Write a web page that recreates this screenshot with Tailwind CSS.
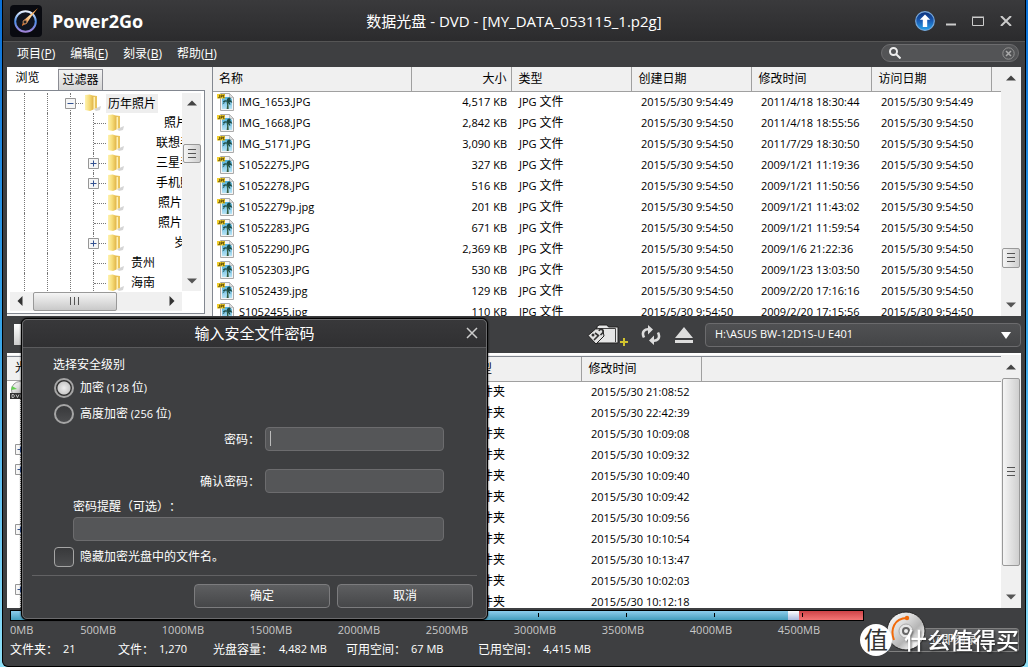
<!DOCTYPE html>
<html lang="zh-CN">
<head>
<meta charset="utf-8">
<title>Power2Go</title>
<script src="https://cdn.jsdelivr.net/npm/@tailwindcss/browser@4"></script>
</head>
<body class="h-screen overflow-hidden bg-linear-to-b from-[#0a6fd6] via-[#38a5e8] to-[#8fe0f7] pr-[2px] pl-[2px] font-['Open_Sans','Noto_Sans_CJK_SC',sans-serif] text-xs text-black [text-spacing-trim:space-all]">
<svg class="absolute size-0" aria-hidden="true">
  <defs>
    <linearGradient id="gold" x1="0" x2="1"><stop offset="0" stop-color="#fff3b0"/><stop offset=".5" stop-color="#f6dc78"/><stop offset="1" stop-color="#dfb347"/></linearGradient>
    <linearGradient id="sky" x1="0" x2="0" y1="0" y2="1"><stop offset="0" stop-color="#4fb0dc"/><stop offset="1" stop-color="#b9e4f5"/></linearGradient>
    <linearGradient id="orb" x1="0" x2="0" y1="0" y2="1"><stop offset="0" stop-color="#0b2f78"/><stop offset=".5" stop-color="#1a5cb4"/><stop offset="1" stop-color="#27a5ec"/></linearGradient>
    <linearGradient id="metal" x1="0" x2="1" y1="0" y2="1"><stop offset="0" stop-color="#fff"/><stop offset=".35" stop-color="#ddd"/><stop offset=".6" stop-color="#b5b5b5"/><stop offset=".8" stop-color="#f5f5f5"/><stop offset="1" stop-color="#999"/></linearGradient>
    <linearGradient id="ring" x1="0" x2="0" y1="0" y2="1"><stop offset="0" stop-color="#e8f1ff"/><stop offset=".5" stop-color="#4d8eea"/><stop offset="1" stop-color="#a184d8"/></linearGradient>
    <linearGradient id="flame" x1="0" x2="1" y1="1" y2="0"><stop offset="0" stop-color="#d4621a"/><stop offset=".5" stop-color="#ffd9a0"/><stop offset="1" stop-color="#ff8a1e"/></linearGradient>
  </defs>
  <symbol id="folder" viewBox="0 0 18 18">
    <path d="M10 15l7-3-1 4-4 1z" fill="#b9b9b9" opacity=".6"/>
    <path d="M5 1l8 1v12l-4 1z" fill="#e9c45d"/><path d="M1 1l5-.6 3.500 2v13.200L6 17l-5-1z" fill="url(#gold)"/><path d="M9.500 3v12.500l1.500-1V3z" fill="#fff1b5"/>
  </symbol>
  <symbol id="jpg" viewBox="0 0 18 18">
    <path d="M3.500.5h9l4 4v13h-13z" fill="#f4f4f4" stroke="#aaa"/><path d="M12.500.5v4h4z" fill="#ddd" stroke="#aaa" stroke-width=".6"/>
    <path d="M5 4h7.500l2.500 2v10H5z" fill="url(#sky)"/>
    <path d="M9.500 8q1 3 .2 8h2q-.2-5-1-8z" fill="#345a3c"/><path d="M10.400 8.500q-4-.5-5 3 1.500-2 3-1.500-1-.5-2.600-1.500 2-2 4-1 0-3 3-3 1.500.7.500 2.500 1.500 0 2 3-1-1-3-1 1 1 1 3-2-1-2.900-3.500z" fill="#1c4a43"/>
    <path d="M0 1h8v4.500H0z" fill="#f3cf2c"/><path d="M1 4.700h1.600V1.800M4 5V2h1.300v1.500H4M7.600 2H6.500v2.600h1.100" fill="none" stroke="#403500" stroke-width=".7"/>
  </symbol>
  <symbol id="plus" viewBox="0 0 11 11"><path d="M.5.5h10v10H.5z" fill="#f5f5f5" stroke="#969696"/><path d="M2.500 5.500h6M5.500 2.500v6" stroke="#31508f"/></symbol>
  <symbol id="minus" viewBox="0 0 11 11"><path d="M.5.5h10v10H.5z" fill="#f5f5f5" stroke="#969696"/><path d="M2.500 5.500h6" stroke="#31508f"/></symbol>
  <symbol id="up" viewBox="0 0 10 6"><path d="M0 5.500L5 .5l5 5z" fill="#444"/></symbol>
  <symbol id="down" viewBox="0 0 10 6"><path d="M0 .5h10l-5 5z" fill="#555"/></symbol>
</svg>

<div class="relative flex h-full flex-col overflow-hidden rounded-b-md border-x border-b border-black bg-[#3e3f41]">
  <header class="flex h-[41px] shrink-0 items-center bg-linear-to-b from-[#3a3a3c] to-[#2b2b2d] px-[7px] text-white">
    <div class="flex flex-1 items-center">
      <svg class="size-[32px]" viewBox="0 0 32 32"><rect width="32" height="32" rx="4" fill="#090a10"/><circle cx="15.500" cy="16.500" r="10.300" fill="#10141f" stroke="url(#ring)" stroke-width="2"/><path d="M12 20l2-5L28 3l-7 9-4 6-5 3z" fill="url(#flame)"/><circle cx="15" cy="17" r="2" fill="#222" stroke="#c98a5c"/></svg>
      <span class="ml-[10px] text-lg font-bold">Power2Go</span>
    </div>
    <h1 class="text-[15px] whitespace-nowrap">数据光盘 - DVD - [MY_DATA_053115_1.p2g]</h1>
    <div class="flex flex-1 items-center justify-end">
      <button aria-label="升级"><svg class="size-[20px]" viewBox="0 0 20 20"><circle cx="10" cy="10" r="9.300" fill="url(#orb)" stroke="#78a9dc" stroke-width="1.200"/><path d="M10 3.500l5.200 5.300h-3V16H7.800V8.800h-3z" fill="#fff"/></svg></button>
      <button aria-label="最小化" class="ml-[11px]"><svg class="h-[12px] w-[10px]" viewBox="0 0 10 12"><path d="M0 9.500h10" stroke="#ccc" stroke-width="2"/></svg></button>
      <button aria-label="最大化" class="ml-[16px]"><svg class="h-[10px] w-[12px]" viewBox="0 0 12 10"><path d="M.5 1.500h11v8H.5zM0 1h12" fill="none" stroke="#ccc"/></svg></button>
      <button aria-label="关闭" class="mr-[6px] ml-[16px]"><svg class="h-[10px] w-[12px]" viewBox="0 0 12 10"><path d="M1 0l10 10M11 0L1 10" stroke="#ccc" stroke-width="2"/></svg></button>
    </div>
  </header>
  <div class="flex h-[26px] shrink-0 items-center justify-between border-t border-[#555] pr-[6px] pb-[3px] pl-[14px] text-white">
    <nav class="flex gap-[15px] pt-[2px] text-xs">
      <button>项目(<u>P</u>)</button><button>编辑(<u>E</u>)</button><button>刻录(<u>B</u>)</button><button>帮助(<u>H</u>)</button>
    </nav>
    <label class="flex h-[18px] w-[138px] items-center rounded-full border border-[#6c6c6e] bg-[#535456] pr-[3px] pl-[7px]">
      <svg class="size-[12px] shrink-0" viewBox="0 0 12 12"><circle cx="4.500" cy="4.500" r="3.500" fill="none" stroke="#eee" stroke-width="2"/><path d="M7 7l4.500 4.500" stroke="#eee" stroke-width="2"/></svg>
      <input aria-label="搜索" class="min-w-0 flex-1 bg-transparent outline-none">
      <button aria-label="清除"><svg class="size-[13px]" viewBox="0 0 13 13"><circle cx="6.500" cy="6.500" r="5.700" fill="none" stroke="#929292"/><path d="M4 4l5 5M9 4L4 9" stroke="#aaa" stroke-width="1.500"/></svg></button>
    </label>
  </div>

  <main class="mr-[4px] ml-[4px] flex min-h-0 flex-1 flex-col">
    <div class="flex min-h-0 flex-[250] bg-[#f0f0f0]">
      <aside class="mr-[5px] flex w-[200px] shrink-0 flex-col bg-[#f0f0f0]">
        <div role="tablist" class="flex h-[23px] shrink-0 items-end">
          <button role="tab" aria-selected="true" class="h-[23px] w-[51px] bg-white pr-[10px] pb-[2px] text-center">浏览</button>
          <button role="tab" aria-selected="false" class="h-[21px] w-[45px] border border-b-0 border-[#8b8c93] bg-linear-to-b from-[#f3f3f3] to-[#d6d6d6]">过滤器</button>
        </div>
        <div class="mr-[2px] mb-[2px] flex min-h-0 flex-1 flex-col border-t border-r border-b border-[#828790] bg-white pt-[2px] pl-[3px]">
          <div class="flex min-h-0 flex-1 pr-[3px]">
            <ul id="tree" class="relative min-w-0 flex-1 overflow-hidden pl-[14px]"></ul>
            <div class="flex w-[19px] flex-col items-center bg-[#f0f0f0] py-[7px]">
              <svg class="h-[6px] w-[10px] shrink-0"><use href="#up"/></svg>
              <div class="flex-[38]"></div>
              <div class="flex h-[19px] w-[18px] shrink-0 items-center justify-center rounded-xs border border-[#999] bg-linear-to-r from-[#f5f5f5] to-[#cfcfcf]"><svg class="size-[10px]" viewBox="0 0 10 10"><path d="M1 .5h8M1 4.500h8M1 8.500h8" stroke="#555"/></svg></div>
              <div class="flex-[114]"></div>
              <svg class="h-[6px] w-[10px] shrink-0"><use href="#down"/></svg>
            </div>
          </div>
          <div class="mt-px mr-[22px] mb-[2px] flex h-[19px] shrink-0 items-center bg-[#f0f0f0] pl-[7px]">
            <svg class="h-[10px] w-[6px]" viewBox="0 0 6 10"><path d="M5.500 0v10L.5 5z" fill="#333"/></svg>
            <div class="ml-[10px] flex h-[19px] w-[84px] items-center justify-center rounded-xs border border-[#999] bg-linear-to-b from-[#f5f5f5] to-[#c9c9c9]"><svg class="size-[10px]" viewBox="0 0 10 10"><path d="M.5 1v8M4.500 1v8M8.500 1v8" stroke="#555"/></svg></div>
            <svg class="mr-[7px] ml-auto h-[10px] w-[6px]" viewBox="0 0 6 10"><path d="M.5 0v10l5-5z" fill="#333"/></svg>
          </div>
        </div>
      </aside>
      <section class="min-w-0 flex-1 overflow-hidden border-l border-[#828790] bg-white">
        <table class="w-full table-fixed border-collapse">
          <colgroup><col class="w-[198px]"><col class="w-[100px]"><col class="w-[120px]"><col class="w-[120px]"><col class="w-[120px]"><col class="w-[120px]"><col></colgroup>
          <thead><tr class="h-[24px] border-b border-[#a0a0a0] bg-[#f0f0f0] text-left">
            <th class="border-r border-[#a0a0a0] pl-[6px] font-normal">名称</th><th class="border-r border-[#a0a0a0] pr-[4px] text-right font-normal">大小</th><th class="border-r border-[#a0a0a0] pl-[7px] font-normal">类型</th><th class="border-r border-[#a0a0a0] pl-[7px] font-normal">创建日期</th><th class="border-r border-[#a0a0a0] pl-[7px] font-normal">修改时间</th><th class="border-r border-[#a0a0a0] pl-[7px] font-normal">访问日期</th><th></th>
          </tr></thead>
          <tbody id="files"></tbody>
        </table>
      </section>
      <div class="flex w-[20px] shrink-0 flex-col items-center bg-[#f0f0f0] py-[8px]">
        <svg class="h-[6px] w-[10px] shrink-0"><use href="#up"/></svg>
        <div class="flex-[168]"></div>
        <div class="flex h-[20px] w-[18px] shrink-0 items-center justify-center rounded-xs border border-[#999] bg-linear-to-r from-[#f5f5f5] to-[#cfcfcf]"><svg class="size-[10px]" viewBox="0 0 10 10"><path d="M1 .5h8M1 4.500h8M1 8.500h8" stroke="#555"/></svg></div>
        <div class="flex-[34]"></div>
        <svg class="h-[6px] w-[10px] shrink-0"><use href="#down"/></svg>
      </div>
    </div>

    <div class="flex h-[37px] shrink-0 items-center bg-[#3e3f41] pt-px pl-[7px]">
      <button aria-label="添加" class="h-[21px] w-[30px] bg-linear-to-b from-white to-[#ccc]"></button>
      <button aria-label="安全文件夹" class="ml-auto"><svg class="h-[24px] w-[42px]" viewBox="0 0 42 24"><path d="M10 6V3.500l2-1.500h8l1.500 2H31v16H10z" fill="#e6e6e6" stroke="#222"/><path d="M11 5.500h17.500V19" fill="none" stroke="#444"/><path d="M1 12.500L8.500 6l7-.5L17 13l-8 8z" fill="#e2e2e2" stroke="#222"/><circle cx="6" cy="12" r="1.500" fill="#333"/><path d="M12 8c1-3 5-1.500 4 1.500L13.500 12M8 10l4 3M7 17l5-5" fill="none" stroke="#333" stroke-width="1.600"/><path d="M37 15v8M33 19h8" stroke="#d1c32f" stroke-width="2"/></svg></button>
      <button aria-label="刷新" class="ml-[12px]"><svg class="size-[20px]" viewBox="0 0 20 20"><path d="M3 12.500C0 6.500 4 3.500 9 4.500M17 7.500c3 6-1 9-6 8" fill="none" stroke="#ddd" stroke-width="2.600"/><path d="M7 0l5 4.500-5 5zM13 20l-5-4.500 5-5z" fill="#ddd"/></svg></button>
      <button aria-label="弹出" class="ml-[13px]"><svg class="h-[18px] w-[20px]" viewBox="0 0 20 18"><path d="M10 1l9 11H1zM1 14h18v3H1z" fill="#ddd"/></svg></button>
      <div class="relative ml-[11px] w-[316px]">
        <select aria-label="刻录机" class="block h-[24px] w-full appearance-none rounded-[4px] border border-[#6b6b6d] bg-linear-to-b from-[#505153] to-[#444547] pl-[9px] text-[11px] text-white"><option>H:\ASUS BW-12D1S-U E401</option></select>
        <svg class="pointer-events-none absolute top-[9px] right-[10px] h-[7px] w-[10px]" viewBox="0 0 10 7"><path d="M0 0h10L5 7z" fill="#fff"/></svg>
      </div>
    </div>

    <div class="flex min-h-0 flex-[254] border-t-2 border-white bg-[#f0f0f0] pt-px">
      <section class="flex min-w-0 flex-1 overflow-hidden border-t border-[#828790] bg-white">
        <div class="flex w-[454px] shrink-0 flex-col">
          <div class="h-[24px] shrink-0 border-b border-[#a0a0a0] bg-[#f0f0f0] pt-[3px] pl-[8px]">光盘</div>
          <div class="relative min-h-0 flex-1">
            <svg class="absolute top-0 left-[3px] h-[18px] w-[20px]" viewBox="0 0 20 18"><circle cx="10" cy="9" r="8.500" fill="url(#metal)" stroke="#999"/><path d="M2 5l5 3-6 1z" fill="#63ce52"/><path d="M0 12h20v6H0z" fill="#333"/><path d="M2 13.500v3h1.500l1-1.500-1-1.500zM6 13.500l1.500 3 1.500-3M11 13.500v3h1.500l1-1.500-1-1.500z" fill="none" stroke="#ddd" stroke-width=".8"/></svg>
            <div class="absolute top-[18px] bottom-0 left-[13px] border-l border-dotted border-[#777]"></div>
            <ul id="discTree" class="flex flex-col pt-[59px] pl-[8px]"></ul>
          </div>
        </div>
        <table class="h-min w-full table-fixed border-collapse">
          <colgroup><col class="w-[120px]"><col class="w-[120px]"><col></colgroup>
          <thead><tr class="h-[25px] border-b border-[#a0a0a0] bg-[#f0f0f0] text-left"><th class="border-r border-[#a0a0a0] pl-[7px] font-normal">类型</th><th class="border-r border-[#a0a0a0] pl-[7px] font-normal">修改时间</th><th></th></tr></thead>
          <tbody id="folders"></tbody>
        </table>
      </section>
      <div class="flex w-[20px] shrink-0 flex-col items-center bg-[#f0f0f0] py-[8px]">
        <svg class="h-[6px] w-[10px] shrink-0"><use href="#up"/></svg>
        <div class="my-[8px] flex min-h-0 w-[18px] flex-1 items-center justify-center rounded-xs border border-[#999] bg-linear-to-r from-[#f5f5f5] to-[#cfcfcf]"><svg class="size-[10px]" viewBox="0 0 10 10"><path d="M1 .5h8M1 4.500h8M1 8.500h8" stroke="#555"/></svg></div>
        <svg class="mt-[20px] h-[6px] w-[10px] shrink-0"><use href="#down"/></svg>
      </div>
    </div>
  </main>

  <footer class="relative h-[58px] shrink-0 pt-[2px] pr-[8px] pl-[7px] text-white">
    <div class="flex h-[11px] w-[854px] border border-black">
      <div id="used" class="flex w-[777px] items-start bg-linear-to-b from-[#8ccdec] to-[#429dbd] pt-[2px]"></div>
      <div class="w-[11px] bg-linear-to-b from-white to-[#aab9dc]"></div>
      <div class="flex-1 bg-linear-to-b from-[#ce4348] to-[#f47575] pt-[2px] pl-[3px]"><i class="block h-[4px] w-px bg-black"></i></div>
    </div>
    <div id="scale" class="flex pt-[1px] text-[11px] leading-[16px] text-[#c8c8c8]"></div>
    <dl class="flex gap-[16px] pt-[2px] text-[11px] leading-[18px] whitespace-nowrap">
      <div class="flex w-[92px] gap-[5px]"><dt class="text-xs leading-[18px]">文件夹<span class="font-['Noto_Sans_CJK_TC']">：</span></dt><dd>21</dd></div>
      <div class="flex w-[79px] gap-[5px]"><dt class="text-xs leading-[18px]">文件<span class="font-['Noto_Sans_CJK_TC']">：</span></dt><dd>1,270</dd></div>
      <div class="flex w-[117px] gap-[6px]"><dt class="text-xs leading-[18px]">光盘容量<span class="font-['Noto_Sans_CJK_TC']">：</span></dt><dd>4,482 MB</dd></div>
      <div class="flex w-[116px] gap-[5px]"><dt class="text-xs leading-[18px]">可用空间<span class="font-['Noto_Sans_CJK_TC']">：</span></dt><dd>67 MB</dd></div>
      <div class="flex gap-[5px]"><dt class="text-xs leading-[18px]">已用空间<span class="font-['Noto_Sans_CJK_TC']">：</span></dt><dd>4,415 MB</dd></div>
    </dl>
    <button class="absolute top-[20px] right-[6px] h-[24px] w-[132px] rounded-[3px] border border-[#808080] bg-linear-to-b from-[#606163] to-[#464749] pl-[1px] text-xs">立即刻录</button>
    <svg class="absolute top-[3px] right-[99px] size-[40px]" viewBox="0 0 40 40"><circle cx="20" cy="20" r="19" fill="url(#metal)" stroke="#222"/><circle cx="20" cy="20" r="7" fill="#e6e6e6" stroke="#aaa"/><circle cx="20" cy="20" r="3" fill="#eee" stroke="#666" stroke-width="2"/><path d="M8 29C4 19 8 7 21 7" fill="none" stroke="#f26a0a" stroke-width="2"/><circle cx="21" cy="7" r="2.200" fill="#f26a0a"/></svg>
    <div class="pointer-events-none absolute top-[16px] right-[6px] flex items-center gap-[12px] text-white">
      <span class="flex size-[32px] items-center justify-center rounded-full bg-white text-2xl leading-none text-[#333]">值</span>
      <span class="text-[23px] leading-[32px] font-medium drop-shadow-[1px_1px_1px_#0008]">什么值得买</span>
    </div>
  </footer>

  <form role="dialog" aria-labelledby="dlgTitle" class="absolute top-[318px] left-[18px] flex w-[467px] flex-col rounded-md border border-black bg-[#3e3f41] text-white shadow-[0_0_2px_#000]">
    <div class="flex flex-col rounded-[5px] border border-[#6b6b6d] pb-[10px]">
      <div class="flex h-[28px] items-center rounded-t-[5px] border-b border-[#5b5b5d] bg-linear-to-b from-[#38383a] to-[#303032] pr-[8px] pb-px pl-[10px]">
        <h2 id="dlgTitle" class="flex-1 pl-[10px] text-center text-[15px]">输入安全文件密码</h2>
        <button type="button" aria-label="关闭"><svg class="size-[12px]" viewBox="0 0 12 12"><path d="M1 1l10 10M11 1L1 11" stroke="#ccc" stroke-width="1.500"/></svg></button>
      </div>
      <fieldset class="pt-[7px] pl-[31px]">
        <legend class="sr-only">安全级别</legend>
        <p class="-ml-px leading-[20px]">选择安全级别</p>
        <label class="mt-[3px] flex items-center gap-[6px] text-[11px]"><input type="radio" name="level" checked class="size-[20px] appearance-none rounded-full border-2 border-[#a5a5a5] bg-[radial-gradient(circle,#eee_0,#ccc_6px,#333_7px)]"><span><span class="text-xs">加密</span> (128 <span class="text-xs">位</span>)</span></label>
        <label class="mt-[6px] flex items-center gap-[6px] text-[11px]"><input type="radio" name="level" class="size-[20px] appearance-none rounded-full border-2 border-[#a5a5a5] bg-linear-to-b from-[#38393b] to-[#4b4c4e]"><span><span class="text-xs">高度加密</span> (256 <span class="text-xs">位</span>)</span></label>
      </fieldset>
      <div class="mt-[3px] flex items-center justify-end pr-[42px]"><label for="pw" class="pr-[5px]">密码<span class="font-['Noto_Sans_CJK_TC']">：</span></label><div class="relative"><input id="pw" type="password" class="block h-[24px] w-[179px] rounded-[4px] border border-[#6c6c6e] bg-[#555658] px-[5px] outline-none"><i class="absolute top-[4px] left-[5px] h-[15px] w-px bg-[#bbb]"></i></div></div>
      <div class="mt-[18px] flex items-center justify-end pr-[42px]"><label for="pw2" class="pr-[5px]">确认密码<span class="font-['Noto_Sans_CJK_TC']">：</span></label><input id="pw2" type="password" class="block h-[24px] w-[179px] rounded-[4px] border border-[#6c6c6e] bg-[#555658] px-[5px]"></div>
      <div class="mt-[2px] pr-[42px] pl-[50px]"><label for="hint" class="block leading-[21px]">密码提醒<span class="font-['Noto_Sans_CJK_TC']">（</span>可选<span class="font-['Noto_Sans_CJK_TC']">）：</span></label><input id="hint" class="block h-[24px] w-full rounded-[4px] border border-[#6c6c6e] bg-[#555658] px-[5px]"></div>
      <label class="mt-[6px] flex items-center gap-[6px] pl-[31px]"><input type="checkbox" class="size-[20px] appearance-none rounded-[4px] border border-[#a5a5a5] bg-linear-to-b from-[#38393b] to-[#4b4c4e]">隐藏加密光盘中的文件名。</label>
      <hr class="mx-[9px] mt-[8px] border-[#626264]">
      <div class="mt-[8px] flex justify-end gap-[7px] pr-[13px]"><button class="h-[24px] w-[136px] rounded-[4px] border border-[#7c7c7e] bg-linear-to-b from-[#5e5f61] to-[#464749]">确定</button><button type="button" class="h-[24px] w-[136px] rounded-[4px] border border-[#7c7c7e] bg-linear-to-b from-[#5e5f61] to-[#464749]">取消</button></div>
    </div>
  </form>
</div>

<script>
const files = [
 ['IMG_1653.JPG','4,517','2015/5/30 9:54:49','2011/4/18 18:30:44','2015/5/30 9:54:49'],
 ['IMG_1668.JPG','2,842','2015/5/30 9:54:50','2011/4/18 18:55:56','2015/5/30 9:54:50'],
 ['IMG_5171.JPG','3,090','2015/5/30 9:54:50','2011/7/29 18:30:50','2015/5/30 9:54:50'],
 ['S1052275.JPG','327','2015/5/30 9:54:50','2009/1/21 11:19:36','2015/5/30 9:54:50'],
 ['S1052278.JPG','516','2015/5/30 9:54:50','2009/1/21 11:50:56','2015/5/30 9:54:50'],
 ['S1052279p.jpg','201','2015/5/30 9:54:50','2009/1/21 11:43:02','2015/5/30 9:54:50'],
 ['S1052283.JPG','671','2015/5/30 9:54:50','2009/1/21 11:59:54','2015/5/30 9:54:50'],
 ['S1052290.JPG','2,369','2015/5/30 9:54:50','2009/1/6 21:22:36','2015/5/30 9:54:50'],
 ['S1052303.JPG','530','2015/5/30 9:54:50','2009/1/23 13:03:50','2015/5/30 9:54:50'],
 ['S1052439.jpg','129','2015/5/30 9:54:50','2009/2/20 17:16:16','2015/5/30 9:54:50'],
 ['S1052455.jpg','110','2015/5/30 9:54:50','2009/2/20 17:15:56','2015/5/30 9:54:50']];
document.getElementById('files').innerHTML = files.map(f => `<tr class="h-[21px] text-[11px] leading-[18px] whitespace-nowrap">
<td class="pl-[4px]"><div class="flex items-center gap-[4px]"><svg class="size-[18px]"><use href="#jpg"/></svg>${f[0]}</div></td>
<td class="pr-[4px] text-right">${f[1]} KB</td><td class="pl-[8px]">JPG <span class="text-xs">文件</span></td>
<td class="pl-[10px]">${f[2]}</td><td class="pl-[10px]">${f[3]}</td><td class="pl-[10px]">${f[4]}</td><td></td></tr>`).join('');

const folders = ['21:08:52','22:42:39','10:09:08','10:09:32','10:09:40','10:09:42','10:09:56','10:10:54','10:13:47','10:02:03','10:12:18'];
document.getElementById('folders').innerHTML = folders.map(t => `<tr class="h-[21px] text-[11px] leading-[18px] whitespace-nowrap"><td class="pl-[8px] text-xs">文件夹</td><td class="pl-[10px]">2015/5/30 ${t}</td><td></td></tr>`).join('');

// [label, toggle, label offset]
const tree = [['照片','',36],['联想手机','',28],['三星手机','plus',28],['手机照片','plus',28],['照片','',30],['照片2','',30],['岁','plus',46],['贵州','',3],['海南','',3]];
const guides = '<span class="h-full w-[23px] shrink-0 border-l border-dotted border-[#777]"></span>'.repeat(2);
const toggle = id => `<svg class="absolute top-[5px] -left-[6px] size-[11px]"><use href="#${id}"/></svg>`;
document.getElementById('tree').innerHTML =
 `<li class="flex h-[20px] items-center whitespace-nowrap">${guides}<span class="relative h-full w-[14px] shrink-0 border-l border-dotted border-[#777]"><i class="absolute top-[10px] left-0 w-[12px] border-t border-dotted border-[#777]"></i>${toggle('minus')}</span><svg class="size-[18px] shrink-0"><use href="#folder"/></svg><span class="ml-[4px] bg-[#eee] px-[2px] leading-[19px]">历年照片</span></li>` +
 tree.map(([t,id,x]) => `<li class="flex h-[20px] items-center whitespace-nowrap">${guides}<span class="h-full w-[23px] shrink-0 border-l border-dotted border-[#777]"></span><span class="relative h-full w-[14px] shrink-0 border-l border-dotted border-[#777]"><i class="absolute top-[10px] left-0 w-[12px] border-t border-dotted border-[#777]"></i>${id ? toggle(id) : ''}</span><svg class="size-[18px] shrink-0"><use href="#folder"/></svg><span class="pl-[3px]" style="margin-left:${x}px">${t}</span></li>`).join('');

document.getElementById('discTree').innerHTML = [1,1,0,0,1,0,0,1].map(v => `<li class="flex h-[20px] items-center">${v ? '<svg class="relative size-[11px]"><use href="#plus"/></svg>' : ''}</li>`).join('');

document.getElementById('used').innerHTML = '<i class="h-[4px] w-[88px] border-r border-black"></i>'.repeat(8);

document.getElementById('scale').innerHTML = [0,500,1000,1500,2000,2500,3000,3500,4000,4500].map((n,i) =>
 `<span class="${i === 0 ? 'w-[25px]' : i === 1 ? 'w-[81px] text-right' : 'w-[88px] text-right'}">${n}MB</span>`).join('');
</script>
</body>
</html>
